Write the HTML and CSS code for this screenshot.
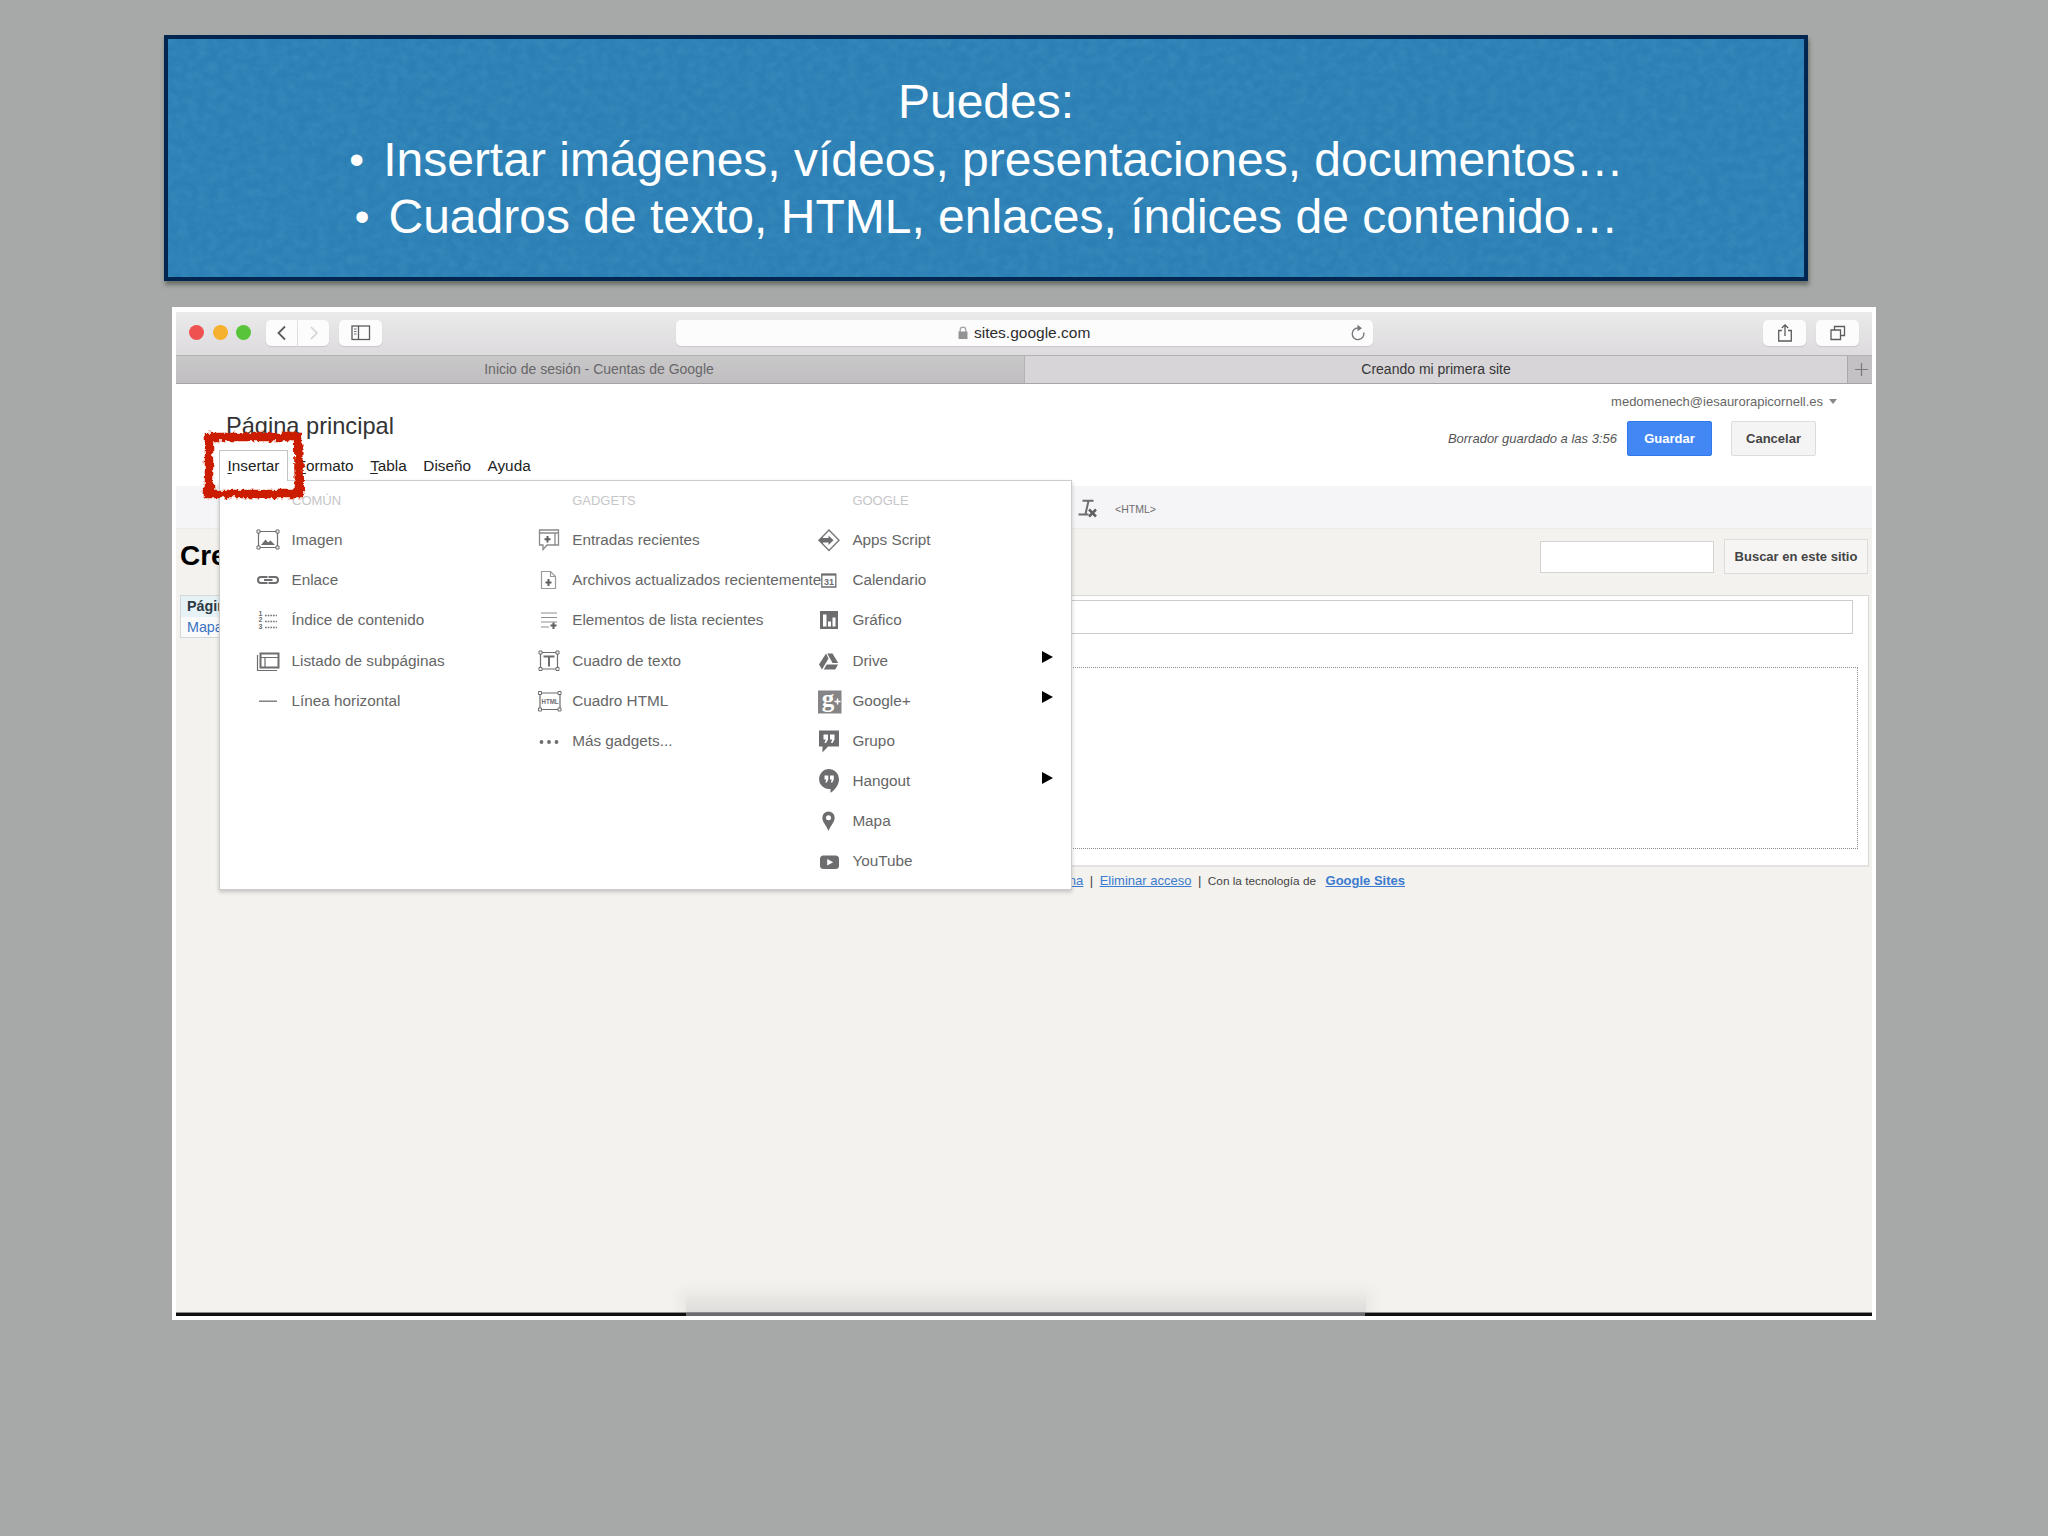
FILE: index.html
```html
<!DOCTYPE html>
<html lang="es">
<head>
<meta charset="UTF-8">
<title>Insertar en Google Sites</title>
<link rel="stylesheet" href="styles.css">
</head>
<body>
<div class="banner">
<svg class="texture" width="1636" height="238">
<filter id="paper" x="0" y="0" width="100%" height="100%">
<feTurbulence type="fractalNoise" baseFrequency="0.1 0.12" numOctaves="5" seed="4"/>
<feColorMatrix values="0 0 0 0 0.08  0 0 0 0 0.35  0 0 0 0 0.55  0.5 0 0 0 -0.16"/>
</filter>
<rect width="1636" height="238" filter="url(#paper)"/>
</svg>
<p>Puedes:</p>
<p><span class="dot">•</span>Insertar imágenes, vídeos, presentaciones, documentos…</p>
<p><span class="dot">•</span>Cuadros de texto, HTML, enlaces, índices de contenido…</p>
</div>

<div class="window">
<div class="toolbar">
<div class="lights"><i class="red"></i><i class="yellow"></i><i class="green"></i></div>
<div class="nav-buttons">
<span class="btn half left"><svg width="14" height="18" viewBox="0 0 14 18"><path d="M10 2.500L3.500 9l6.500 6.500" fill="none" stroke="#5b5b5d" stroke-width="1.800"/></svg></span>
<span class="btn half right"><svg width="14" height="18" viewBox="0 0 14 18"><path d="M4 3l6 6-6 6" fill="none" stroke="#d3d2d4" stroke-width="1.600"/></svg></span>
</div>
<span class="btn sidebar"><svg width="20" height="16" viewBox="0 0 20 16"><g fill="none" stroke="#5b5b5d" stroke-width="1.300"><rect x="1" y="1" width="17.500" height="13.500"/><path d="M7.500 1v13.500"/><path d="M3 4h2.500M3 6.500h2.500M3 9h2.500" stroke-width="0.900"/></g></svg></span>
<div class="address">
<span class="url"><svg width="10" height="14" viewBox="0 0 10 14"><path d="M2.200 6V4a2.800 2.800 0 0 1 5.600 0v2" fill="none" stroke="#a3a2a5" stroke-width="1.300"/><rect x="0.500" y="5.500" width="9" height="7.500" fill="#939295"/></svg>sites.google.com</span>
<svg class="reload" width="16" height="18" viewBox="0 0 16 18"><path d="M8.500 4A5.800 5.800 0 1 0 13.700 8.500" fill="none" stroke="#77767a" stroke-width="1.400"/><path d="M7.500 0.800L12 4.200L7.500 7.200z" fill="#77767a"/></svg>
</div>
<span class="btn share"><svg width="18" height="20" viewBox="0 0 18 20"><path d="M6 7.500H2.700v10.500h12.600V7.500H12M9 13V2M5.800 5L9 1.800L12.200 5" fill="none" stroke="#5b5b5d" stroke-width="1.300"/></svg></span>
<span class="btn tabs-btn"><svg width="18" height="18" viewBox="0 0 18 18"><path d="M2 6h9.500v9.500H2zM5.500 6V2.500h10v9h-4" fill="none" stroke="#5b5b5d" stroke-width="1.300"/></svg></span>
</div>

<div class="tabs">
<div class="tab">Inicio de sesión - Cuentas de Google</div>
<div class="tab active">Creando mi primera site</div>
<div class="tab-add"><svg width="15" height="15" viewBox="0 0 15 15"><path d="M7.500 1v13M1 7.500h13" stroke="#7a797c" stroke-width="1.200"/></svg></div>
</div>

<div class="header">
<div class="header-left">
<h1>Página principal</h1>
<div class="menubar">
<span class="open"><u>I</u>nsertar</span>
<span><u>F</u>ormato</span>
<span><u>T</u>abla</span>
<span>Diseño</span>
<span>Ayuda</span>
</div>
</div>
<div class="header-right">
<div class="account">medomenech@iesaurorapicornell.es<i class="caret"></i></div>
<div class="actions">
<em>Borrador guardado a las 3:56</em>
<button class="save">Guardar</button>
<button class="cancel">Cancelar</button>
</div>
</div>

<!-- Insert menu -->
<div class="menu">
<div class="column">
<h2>COMÚN</h2>
<div class="item"><svg viewBox="0 0 24 24"><g fill="none" stroke="#6d6d70"><path d="M2.500 3.500h19v16h-19z" stroke-width="1.200"/><path d="M5 17l4.500-5.500 2.500 3 2.500-2 4.500 4.500z" fill="#6d6d70" stroke="none"/></g><path d="M1 2h3v3H1zM20 2h3v3h-3zM1 18h3v3H1zM20 18h3v3h-3z" fill="#fff" stroke="#6d6d70"/></svg>Imagen</div>
<div class="item"><svg viewBox="0 0 24 24"><path d="M10.500 10V9H5a3 3 0 0 0 0 6h5.500v-1M13.500 10V9h5.500a3 3 0 0 1 0 6h-5.500v-1M8 12h8.500" fill="none" stroke="#6d6d70" stroke-width="2"/></svg>Enlace</div>
<div class="item"><svg viewBox="0 0 24 24"><path d="M9 7.500h12M9 13.500h12M9 19.500h12" stroke="#77777a" stroke-width="1.300" stroke-dasharray="1.700 1"/><g class="num"><text x="2.500" y="7.500">1</text><text x="2.500" y="14">2</text><text x="2.500" y="20.500">3</text></g></svg>Índice de contenido</div>
<div class="item"><svg viewBox="0 0 24 24"><path d="M4.500 4.500h18v14h-18z" fill="none" stroke="#6d6d70" stroke-width="2"/><path d="M1.500 6v15.500h19.500M5 8.500h17M9 8.500v10" fill="none" stroke="#6d6d70" stroke-width="1.200"/></svg>Listado de subpáginas</div>
<div class="item"><svg viewBox="0 0 24 24"><path d="M3 12.200h18" stroke="#77777a" stroke-width="1.400"/></svg>Línea horizontal</div>
</div>
<div class="column">
<h2>GADGETS</h2>
<div class="item"><svg viewBox="0 0 24 24"><path d="M2.500 2h19v15H10l-4 4.500V17H2.500zM2.500 5h19M18 5v12" fill="none" stroke="#8a8a8d" stroke-width="1.300"/><path d="M10.500 8v6.500M7.500 11.200h6" stroke="#5f5f62" stroke-width="2"/></svg>Entradas recientes</div>
<div class="item"><svg viewBox="0 0 24 24"><path d="M4.500 3.500h9l5 5v12h-14zM13.500 3.500v5h5" fill="none" stroke="#9a9a9d" stroke-width="1.200"/><path d="M11.500 11v7M8.500 14.500h6" stroke="#5f5f62" stroke-width="2"/></svg>Archivos actualizados recientemente</div>
<div class="item"><svg viewBox="0 0 24 24"><path d="M4 5h16M4 9.500h16M4 14h16M4 19h8" stroke="#8f8f92" stroke-width="1.200"/><path d="M16.500 14.500v6.500M13.500 17.500h6" stroke="#5f5f62" stroke-width="2"/></svg>Elementos de lista recientes</div>
<div class="item"><svg viewBox="0 0 24 24"><path d="M3.500 3.500h17v16.500h-17z" fill="none" stroke="#6d6d70" stroke-width="1.200"/><path d="M6.500 7.500h11M12 7.500v10" stroke="#6d6d70" stroke-width="2" fill="none"/><path d="M2 2h3v3H2zM19 2h3v3h-3zM2 18.500h3v3H2zM19 18.500h3v3h-3z" fill="#fff" stroke="#6d6d70"/></svg>Cuadro de texto</div>
<div class="item"><svg viewBox="0 0 24 24"><path d="M3 4h20v16.500H3z" fill="none" stroke="#6d6d70" stroke-width="1.200"/><path d="M1.500 2.500h3v3h-3zM21 2.500h3v3h-3zM1.500 19h3v3h-3zM21 19h3v3h-3z" fill="#fff" stroke="#6d6d70"/><text class="html-label" x="13" y="15.200" textLength="17" lengthAdjust="spacingAndGlyphs">HTML</text></svg>Cuadro HTML</div>
<div class="item"><svg viewBox="0 0 24 24"><g fill="#6d6d70"><circle cx="4.500" cy="13" r="1.900"/><circle cx="12" cy="13" r="1.900"/><circle cx="19.500" cy="13" r="1.900"/></g></svg>Más gadgets...</div>
</div>
<div class="column">
<h2>GOOGLE</h2>
<div class="item"><svg viewBox="0 0 24 24"><path d="M12 2l10 10.200-10 10.200L2 12.200z" fill="none" stroke="#77777a" stroke-width="1.400"/><path d="M1.500 12.200L6 8.700v1.300h5.500V7.500l5 4.700-5 4.700v-2.500H6v1.300z" fill="#6d6d70"/></svg>Apps Script</div>
<div class="item"><svg viewBox="0 0 24 24"><path d="M4.800 6.500h14v12.500h-14z" fill="#fff" stroke="#6d6d70" stroke-width="1.300"/><path d="M4.500 6.500h14.500" stroke="#6d6d70" stroke-width="2"/><text class="day" x="12" y="16.500">31</text></svg>Calendario</div>
<div class="item"><svg viewBox="0 0 24 24"><path d="M3 3h18v18H3z" fill="#6d6d70"/><path d="M6 6.500h3.500v12H6zM11 13.500h3v5h-3zM15.500 9.500h3v9h-3z" fill="#fff"/></svg>Gráfico</div>
<div class="item"><svg viewBox="0 0 24 24"><g fill="#6d6d70"><path d="M9 4.500L2 15.500l3 5L11.500 9.500z"/><path d="M10.200 4.500h5.300l5.700 9.500h-5.600z"/><path d="M9.700 15.500H21l-2.800 5H6.800z"/></g></svg>Drive<i class="arrow"></i></div>
<div class="item"><svg viewBox="0 0 24 24"><path d="M1 1.500h23.500v23H1z" fill="#858588"/><text class="gplus" x="11" y="17.500">g</text><path d="M20.500 9.500v6M17.500 12.500h6" stroke="#fff" stroke-width="1.500"/></svg>Google+<i class="arrow"></i></div>
<div class="item"><svg viewBox="0 0 24 24"><path d="M2 1.500h20v16H11l-5.500 6v-6H2z" fill="#6d6d70"/><path d="M6.500 5.500h4.500v5L9 14H7.500l1.200-3.500H6.500zM13 5.500h4.500v5l-2 3.500H14l1.200-3.500H13z" fill="#fff"/></svg>Grupo</div>
<div class="item"><svg viewBox="0 0 24 24"><path d="M12 0a10 10 0 0 1 10 10c0 6-4 11-8.500 13.800v-3.900A10 10 0 1 1 12 0z" fill="#6d6d70"/><path d="M7.500 6.500h3.800v4L9.800 13.500H8.300l1-3H7.500zM13 6.500h3.800v4l-1.500 3h-1.500l1-3H13z" fill="#fff"/></svg>Hangout<i class="arrow"></i></div>
<div class="item"><svg viewBox="0 0 24 24"><path d="M11.500 2.500a6.200 6.200 0 0 1 6.200 6.200c0 4.300-4.300 8-6.200 13.300C9.600 16.700 5.300 13 5.300 8.700a6.200 6.200 0 0 1 6.200-6.200z" fill="#6d6d70"/><circle cx="11.500" cy="8.700" r="2.500" fill="#fff"/></svg>Mapa</div>
<div class="item"><svg viewBox="0 0 24 24"><rect x="3" y="6.500" width="19" height="13.500" rx="3.500" fill="#6d6d70"/><path d="M10.200 10l6 3.200-6 3.200z" fill="#fff"/></svg>YouTube</div>
</div>
</div>

<svg class="marker" width="116" height="84" viewBox="0 0 116 84">
<filter id="rough" x="-10%" y="-10%" width="120%" height="120%">
<feTurbulence type="fractalNoise" baseFrequency="0.17" numOctaves="3" seed="8"/>
<feDisplacementMap in="SourceGraphic" scale="7" xChannelSelector="R" yChannelSelector="G"/>
</filter>
<path d="M14 14H103M14 14L14 71M103 13L104 70M12 71H103" fill="none" stroke="#cc1f06" stroke-width="8.500" stroke-linecap="square" filter="url(#rough)"/>
</svg>
</div>

<div class="format-bar">
<svg width="20" height="20" viewBox="0 0 20 20"><path d="M4.500 1.800h11M10.500 2L7.500 15M0.500 15.500h10" fill="none" stroke="#6d6d70" stroke-width="2"/><path d="M11 10.500l7 7M18 10.500l-7 7" stroke="#5f5f62" stroke-width="2.500"/></svg>
<span>&lt;HTML&gt;</span>
</div>

<div class="site">
<div class="site-header">
<div class="site-title">Creando mi primera site</div>
<div class="search"><input type="text"><button>Buscar en este sitio</button></div>
</div>
<div class="site-main">
<div class="site-nav"><b>Página principal</b><a>Mapa del sitio</a></div>
<div class="content">
<div class="page-title"></div>
<div class="page-body"></div>
</div>
</div>
<div class="footer">
<a>Imprimir página</a><span>|</span><a>Eliminar acceso</a><span>|</span><small>Con la tecnología de</small><a class="strong">Google Sites</a>
</div>
<div class="dock-shadow"></div>
<div class="bottom-line"></div>
</div>
</div>
</body>
</html>
```
FILE: styles.css
```css
*{
box-sizing:border-box;
}
body{
margin:0;
width:2048px;
height:1536px;
padding:35px 0 0 164px;
overflow:hidden;
background:#a6a9a7;
font-family:"Liberation Sans",Arial,sans-serif;
}
i{
display:block;
}
svg{
flex:none;
}
button{
font-family:inherit;
padding:0;
}

/* slide banner */
.banner{
position:relative;
width:1644px;
height:246px;
padding-top:34px;
background:#2b7fb5;
border:4px solid #02264f;
box-shadow:1px 4px 4px rgba(60,65,55,0.55);
color:#fff;
text-align:center;
font-size:48px;
line-height:57.800px;
}
.banner p{
position:relative;
height:57.700px;
margin:0;
}
.texture{
position:absolute;
left:0;
top:0;
}
.dot{
display:inline-block;
width:17px;
margin-right:18px;
font-size:42px;
line-height:40px;
vertical-align:2px;
}

/* browser window */
.window{
width:1704px;
height:1013px;
margin:26px 0 0 8px;
border:4px solid #fff;
border-top-width:5px;
background:#fff;
display:flex;
flex-direction:column;
}
.toolbar{
height:43px;
flex:none;
display:flex;
align-items:center;
padding:0 13px 2px 13px;
background:linear-gradient(#ebeaeb,#dddbdd);
}
.lights{
display:flex;
gap:8.500px;
width:77px;
}
.lights i{
width:15px;
height:15px;
border-radius:50%;
}
.red{
background:#ee5150;
}
.yellow{
background:#f6b12f;
}
.green{
background:#57c43a;
}
.nav-buttons{
display:flex;
gap:1px;
}
.btn{
display:flex;
align-items:center;
justify-content:center;
width:43px;
height:26px;
background:#fdfcfd;
border-radius:5px;
box-shadow:0 1px 1px #c9c7c9;
}
.half{
width:31px;
}
.left{
border-radius:5px 0 0 5px;
}
.right{
border-radius:0 5px 5px 0;
}
.sidebar{
margin-left:10px;
}
.address{
display:flex;
align-items:center;
width:697px;
height:26px;
margin-left:294px;
padding-right:7px;
background:#fdfcfd;
border-radius:5px;
box-shadow:0 1px 1px #c9c7c9;
font-size:15.500px;
color:#2d2c2e;
}
.url{
flex:1;
display:flex;
align-items:center;
gap:6px;
padding-left:282px;
}
.share{
margin-left:auto;
margin-right:10px;
}
.tabs{
height:29px;
flex:none;
display:flex;
border-top:1px solid #b3b1b3;
border-bottom:1px solid #a6a4a6;
background:#c3c1c3;
font-size:14px;
line-height:27px;
text-align:center;
color:#68676a;
}
.tab{
width:848px;
padding-right:2px;
background:linear-gradient(#c9c8c9,#c0bec0);
}
.active{
width:824px;
padding-right:0;
background:#d7d5d7;
border-left:1px solid #b3b1b3;
border-right:1px solid #aaa8aa;
color:#363537;
}
.tab-add{
flex:1;
display:flex;
align-items:center;
justify-content:center;
padding-left:3px;
}

/* editor header */
.header{
position:relative;
height:102px;
flex:none;
display:flex;
justify-content:space-between;
background:#fff;
}
.header-left{
padding:27px 0 0 43px;
}
h1{
margin:0 0 9px 7px;
font-size:23.600px;
line-height:30px;
font-weight:normal;
color:#333;
}
.menubar{
display:flex;
gap:16.600px;
font-size:15.300px;
line-height:31px;
color:#222;
}
.menubar u{
text-underline-offset:2px;
}
.open{
position:relative;
z-index:3;
height:31px;
width:69px;
margin-right:-8px;
padding-left:7.500px;
line-height:29px;
background:#fff;
border:1px solid #c4c4c4;
border-bottom:none;
}
.header-right{
padding-top:10px;
font-size:13px;
}
.account{
display:flex;
align-items:center;
justify-content:flex-end;
height:15px;
padding-right:35px;
color:#666;
}
.caret{
margin-left:6px;
border:4px solid transparent;
border-top:5px solid #888;
border-bottom:none;
}
.actions{
display:flex;
align-items:center;
margin-top:12px;
padding-right:56px;
color:#555;
}
.actions button{
width:85px;
height:35px;
border-radius:2px;
font-size:13px;
font-weight:bold;
}
.save{
margin:0 19px 0 10px;
background:#4387f5;
border:1px solid #3079ed;
color:#fff;
}
.cancel{
background:#f5f4f5;
border:1px solid #dcdcdc;
color:#444;
}

/* dropdown over the page */
.menu{
position:absolute;
z-index:2;
left:43px;
top:96px;
width:853px;
height:410px;
display:flex;
background:#fff;
border:1px solid #ccc;
box-shadow:0 2px 4px rgba(0,0,0,0.2);
}
.column{
width:280.200px;
flex:none;
}
.column:last-child{
width:291px;
}
h2{
margin:0;
padding-left:72px;
height:39px;
line-height:39.300px;
font-size:13px;
font-weight:normal;
color:#c6c6c8;
}
.item{
display:flex;
align-items:center;
height:40.170px;
padding-left:36px;
font-size:15.300px;
white-space:nowrap;
color:#666;
}
.item svg{
width:24px;
height:24px;
margin-right:11.500px;
overflow:visible;
}
.column + .column .item{
padding-left:37px;
}
.column + .column svg{
margin-right:11px;
}
.item text{
fill:#6d6d70;
font-weight:bold;
text-anchor:middle;
}
.num{
font-size:7px;
}
.num text{
text-anchor:start;
}
.html-label{
font-size:8px;
}
.day{
font-size:9px;
}
.item .gplus{
font-family:"Liberation Serif",serif;
font-size:25px;
fill:#fff;
}
.arrow{
margin:-7px 18px 0 auto;
border:6px solid transparent;
border-left:11px solid #000;
border-right:none;
}
.marker{
position:absolute;
z-index:4;
left:19px;
top:39px;
}

.format-bar{
height:43px;
flex:none;
display:flex;
align-items:center;
gap:17px;
padding:3px 0 0 902px;
background:#f5f4f6;
border-bottom:1px solid #ecebec;
font-size:10.500px;
color:#6d6d70;
}

/* site page */
.site{
flex:1;
display:flex;
flex-direction:column;
background:#f3f2ee;
}
.site-header{
height:66px;
display:flex;
justify-content:space-between;
padding:10px 4px 0 4px;
}
.site-title{
white-space:nowrap;
font-size:28px;
line-height:34px;
font-weight:bold;
color:#000;
}
.search{
display:flex;
gap:10px;
}
.search input{
width:174px;
height:32px;
margin:2px 0 0;
background:#fff;
border:1px solid #d5d4d2;
}
.search button{
width:144px;
height:35px;
background:#f6f5f3;
border:1px solid #dddcda;
font-size:13px;
font-weight:bold;
color:#444;
}
.site-main{
display:flex;
align-items:flex-start;
gap:16px;
padding:0 3px 0 4px;
}
.site-nav{
width:200px;
height:43px;
display:flex;
flex-direction:column;
background:#fafafa;
border:1px solid #d3d8d8;
font-size:14.300px;
line-height:21px;
}
.site-nav b{
padding-left:6px;
background:#e6f2f5;
color:#2b3a44;
}
.site-nav a{
padding-left:6px;
color:#3b73c4;
}
.content{
flex:1;
height:272px;
padding:4px 10px 0 10px;
background:#fff;
border:1px solid #d9d8d5;
border-bottom:2px solid #e3e3e1;
}
.page-title{
height:34px;
margin-right:5px;
border:1px solid #ccc;
}
.page-body{
height:182px;
margin-top:33px;
border:1px dotted #8f8d90;
}
.footer{
display:flex;
justify-content:flex-end;
gap:6.500px;
padding-right:467px;
margin-top:5px;
font-size:13px;
line-height:18px;
color:#444;
}
.footer a{
color:#3b7bd0;
text-decoration:underline;
}
.footer small{
font-size:11.800px;
}
.footer .strong{
margin-left:3px;
font-weight:bold;
}
.dock-shadow{
width:680px;
height:16px;
margin:auto 0 0 510px;
background:linear-gradient(#e9e8e5,#dedddb);
box-shadow:0 0 12px 6px #e9e8e5;
clip-path:inset(-24px -24px 0 -24px);
}
.bottom-line{
height:4px;
border-top:1px solid #8b8a8c;
background:linear-gradient(90deg,#111 510px,#6c6b6f 510px,#6c6b6f 1189px,#111 1189px);
}
```
